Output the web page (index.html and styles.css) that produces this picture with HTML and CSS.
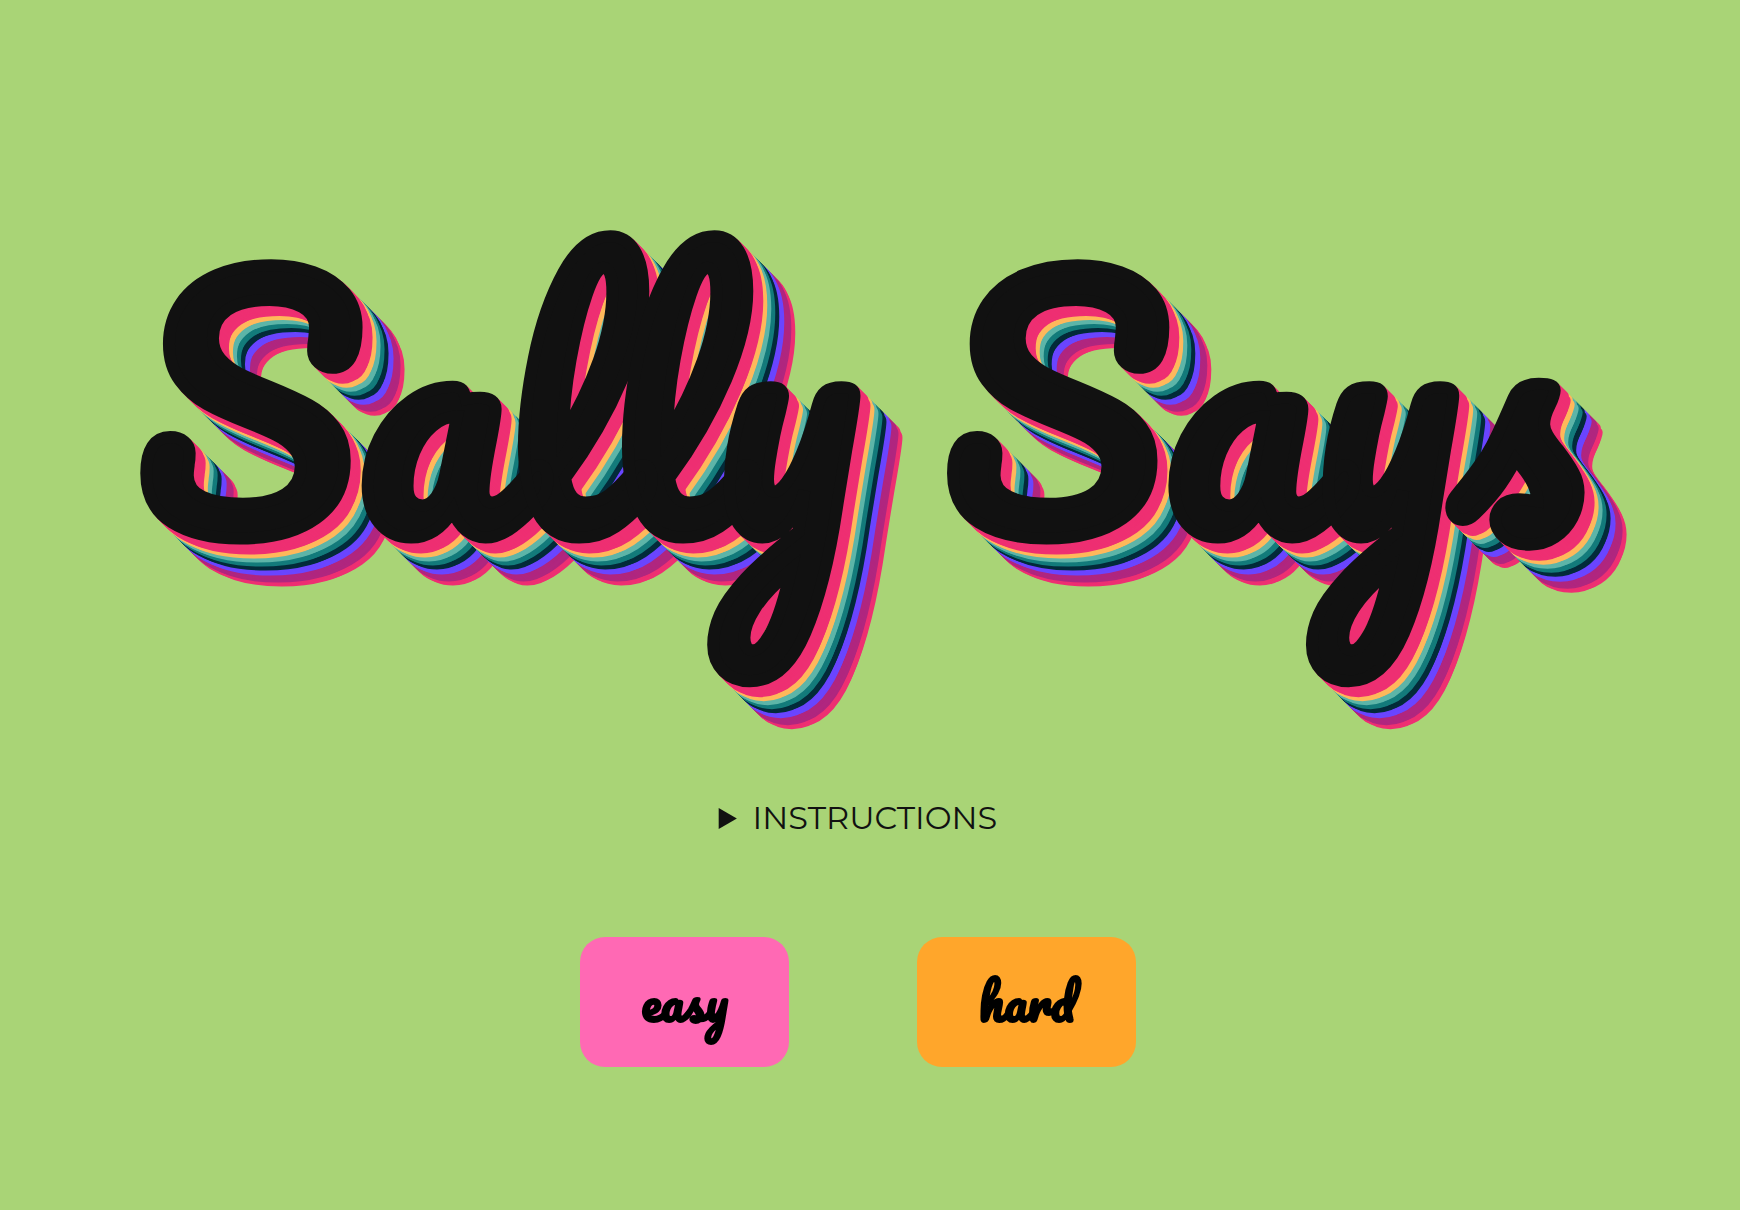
FILE: index.html
```html
<!DOCTYPE html>
<html lang="en">
<head>
<meta charset="utf-8">
<title>Sally Says</title>
<link rel="stylesheet" href="styles.css">
</head>
<body>
<main class="page">
  <h1 class="title">Sally Says</h1>
  <details class="instructions">
    <summary>INSTRUCTIONS</summary>
  </details>
  <div class="levels">
    <button class="level level-easy" type="button">easy</button>
    <button class="level level-hard" type="button">hard</button>
  </div>
</main>
</body>
</html>
```
FILE: styles.css
```css
* { box-sizing: border-box; }
html, body { margin: 0; height: 100%; }
body { background: #a9d476; color: #111; overflow: hidden; }

.page {
  display: flex;
  flex-direction: column;
  align-items: center;
  height: 1210px;
  padding-top: 121px;
  padding-right: 24px;
}

.title {
  --p: #ee2f72;
  --y: #ffb85b;
  --t: #5db5a8;
  --d: #137b7b;
  --n: #032b3a;
  --v: #6a45ff;
  --m: #b0267f;
  margin: 0;
  font-family: "Pacifico", cursive;
  font-weight: 400;
  font-size: 319px;
  line-height: 560px;
  white-space: nowrap;
  color: #111;
  -webkit-text-stroke: 12px #111;
  text-shadow:
    5.2px -3.2px var(--p), -3.2px 5.2px var(--p),
    6.2px -2.2px var(--p), -2.2px 6.2px var(--p),
    7.2px -1.2px var(--p), -1.2px 7.2px var(--p),
    8.2px -0.2px var(--p), -0.2px 8.2px var(--p),
    9.2px 0.8px var(--p), 0.8px 9.2px var(--p),
    10.2px 1.8px var(--p), 1.8px 10.2px var(--p),
    11.2px 2.8px var(--p), 2.8px 11.2px var(--p),
    12.2px 3.8px var(--p), 3.8px 12.2px var(--p),
    13.2px 4.8px var(--p), 4.8px 13.2px var(--p),
    14.2px 5.8px var(--p), 5.8px 14.2px var(--p),
    16px 10px var(--p), 10px 16px var(--p), 14.2px 14.2px var(--p),
    15.2px 6.8px var(--y), 6.8px 15.2px var(--y),
    16.2px 7.8px var(--y), 7.8px 16.2px var(--y),
    17.2px 8.8px var(--y), 8.8px 17.2px var(--y),
    18.2px 9.8px var(--y), 9.8px 18.2px var(--y),
    20px 14px var(--y), 14px 20px var(--y), 18.2px 18.2px var(--y),
    19.2px 10.8px var(--t), 10.8px 19.2px var(--t),
    20.2px 11.8px var(--t), 11.8px 20.2px var(--t),
    21.2px 12.8px var(--t), 12.8px 21.2px var(--t),
    22.2px 13.8px var(--t), 13.8px 22.2px var(--t),
    24px 18px var(--t), 18px 24px var(--t), 22.2px 22.2px var(--t),
    23.2px 14.8px var(--d), 14.8px 23.2px var(--d),
    24.2px 15.8px var(--d), 15.8px 24.2px var(--d),
    25.2px 16.8px var(--d), 16.8px 25.2px var(--d),
    26.2px 17.8px var(--d), 17.8px 26.2px var(--d),
    28px 22px var(--d), 22px 28px var(--d), 26.2px 26.2px var(--d),
    27.2px 18.8px var(--n), 18.8px 27.2px var(--n),
    28.2px 19.8px var(--n), 19.8px 28.2px var(--n),
    29.2px 20.8px var(--n), 20.8px 29.2px var(--n),
    30.2px 21.8px var(--n), 21.8px 30.2px var(--n),
    32px 26px var(--n), 26px 32px var(--n), 30.2px 30.2px var(--n),
    31.2px 22.8px var(--v), 22.8px 31.2px var(--v),
    32.2px 23.8px var(--v), 23.8px 32.2px var(--v),
    33.2px 24.8px var(--v), 24.8px 33.2px var(--v),
    34.2px 25.8px var(--v), 25.8px 34.2px var(--v),
    35.2px 26.8px var(--v), 26.8px 35.2px var(--v),
    37px 31px var(--v), 31px 37px var(--v), 35.2px 35.2px var(--v),
    36.2px 27.8px var(--m), 27.8px 36.2px var(--m),
    37.2px 28.8px var(--m), 28.8px 37.2px var(--m),
    38.2px 29.8px var(--m), 29.8px 38.2px var(--m),
    39.2px 30.8px var(--m), 30.8px 39.2px var(--m),
    40.2px 31.8px var(--m), 31.8px 40.2px var(--m),
    41.2px 32.8px var(--m), 32.8px 41.2px var(--m),
    42.2px 33.8px var(--m), 33.8px 42.2px var(--m),
    44px 38px var(--m), 38px 44px var(--m), 42.2px 42.2px var(--m),
    43.2px 34.8px var(--p), 34.8px 43.2px var(--p),
    44.2px 35.8px var(--p), 35.8px 44.2px var(--p),
    45.2px 36.8px var(--p), 36.8px 45.2px var(--p),
    46.2px 37.8px var(--p), 37.8px 46.2px var(--p),
    48px 42px var(--p), 42px 48px var(--p), 46.2px 46.2px var(--p);
}

.instructions {
  margin-top: 117px;
  font-family: "Montserrat", sans-serif;
  font-size: 32px;
  font-weight: 400;
  line-height: 40px;
}

.levels {
  display: flex;
  gap: 128px;
  margin-top: 99px;
}

.level {
  height: 130px;
  padding: 0 61.5px 3px;
  border: 0;
  border-radius: 25px;
  color: #000;
  font-family: "Pacifico", cursive;
  font-size: 50px;
  -webkit-text-stroke: 2px #000;
}

.level-easy { background: #ff69b4; }
.level-hard { background: #ffa62b; }
```
